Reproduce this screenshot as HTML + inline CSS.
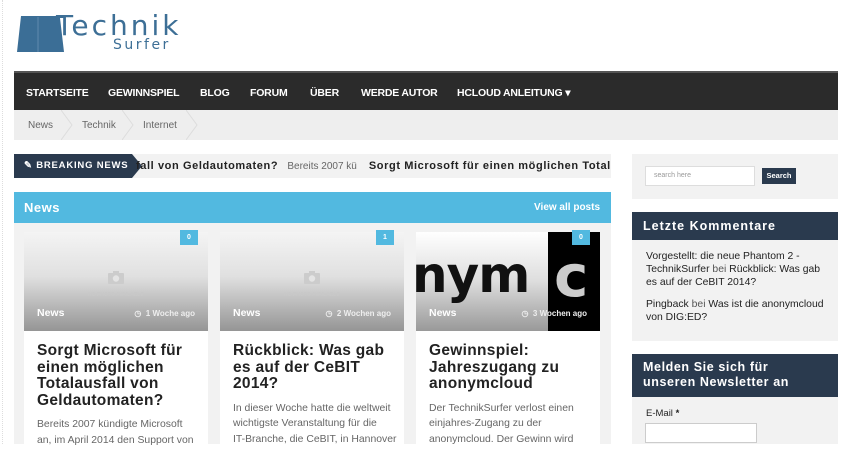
<!DOCTYPE html>
<html><head><meta charset="utf-8"><style>
*{margin:0;padding:0;box-sizing:border-box}
body{width:850px;height:444px;overflow:hidden;background:#fff;font-family:"Liberation Sans",sans-serif;position:relative}
.a{position:absolute}
.nav{left:14px;top:71px;width:824px;height:39px;background:#2b2b2b;border-top:2px solid #555}
.nav span{position:absolute;top:14px;color:#fff;font-weight:bold;font-size:10.5px;letter-spacing:-0.2px}
.bc{left:14px;top:110px;width:824px;height:30px;background:#eee}
.bc span{position:absolute;top:10px;font-size:10px;color:#666}
.sep{position:absolute;top:0;width:12px;height:30px}
.card{position:absolute;top:232px;width:184px;height:220px;background:#fff}
.img{height:99px;background:linear-gradient(#f4f4f4,#e0e0e0 45%,#959595);position:relative}
.card h3{font-size:15.5px;line-height:16.5px;font-weight:bold;color:#222;padding:12px 13px 0;letter-spacing:0.3px}
.card p{font-size:10.4px;line-height:15.5px;color:#666;padding:8px 0 0 13px;white-space:nowrap}
.tag{position:absolute;left:13px;top:75px;color:#fff;font-weight:bold;font-size:10.5px}
.ago{position:absolute;right:13px;top:77px;color:#eee;font-size:8px;font-weight:bold}
.cnt{position:absolute;right:10px;top:-2px;width:18px;height:15px;background:#52b9e0;color:#fff;font-size:7px;font-weight:bold;text-align:center;line-height:15px}
.hd{background:#2a3a4e;color:#fff;font-weight:bold;font-size:12.5px;letter-spacing:1px;padding:0 0 0 11px}
.cam{position:absolute;left:84px;top:38px}
.np{position:absolute;left:0;top:60px;width:184px;text-align:center;color:#c8c8c8;font-size:5px;font-weight:bold}
</style></head><body>
<div class="a" style="left:0;top:0;width:3px;height:444px;border-right:1px dotted #ddd"></div>
<svg class="a" style="left:16px;top:14px" width="50" height="40"><path d="M5 2 L48 2 L48 4 L44 4 L48 38 L1 38 Z" fill="#3b6e96"/><path d="M22 3 L22 38" stroke="#6a93b5" stroke-width="0.8"/></svg>
<div class="a" style="left:56px;top:9px;font-size:28px;color:#3d6f96;letter-spacing:3px;font-family:'DejaVu Sans',sans-serif">Technik</div>
<div class="a" style="left:113px;top:37px;font-size:14px;color:#3d6f96;letter-spacing:2.5px;font-family:'DejaVu Sans',sans-serif">Surfer</div>
<div class="a nav"><span style="left:12px">STARTSEITE</span><span style="left:94px">GEWINNSPIEL</span><span style="left:186px">BLOG</span><span style="left:236px">FORUM</span><span style="left:296px">ÜBER</span><span style="left:347px">WERDE AUTOR</span><span style="left:443px">HCLOUD ANLEITUNG ▾</span></div>
<div class="a bc"><span style="left:14px">News</span>
<svg class="sep" style="left:47px"><path d="M0 0 L11 15 L0 30" stroke="#ddd" fill="none"/></svg>
<span style="left:68px">Technik</span>
<svg class="sep" style="left:108px"><path d="M0 0 L11 15 L0 30" stroke="#ddd" fill="none"/></svg>
<span style="left:129px">Internet</span>
<svg class="sep" style="left:172px"><path d="M0 0 L11 15 L0 30" stroke="#ddd" fill="none"/></svg></div>
<div class="a" style="left:14px;top:154px;width:597px;height:24px;background:#f2f2f2;overflow:hidden;white-space:nowrap">
<div class="a" style="left:0;top:0;width:118px;height:24px;background:#2a3a4e;color:#fff;font-size:9.5px;font-weight:bold;letter-spacing:0.8px;line-height:24px;padding-left:10px">✎ BREAKING NEWS</div>
<div class="a" style="left:118px;top:0;border-left:10px solid #2a3a4e;border-top:12px solid transparent;border-bottom:12px solid transparent"></div>
<div class="a" style="left:122px;top:6px;font-size:11px;font-weight:bold;color:#222;letter-spacing:0.6px">fall von Geldautomaten? <span style="font-weight:normal;color:#666;font-size:10px;letter-spacing:0">&nbsp;&nbsp;Bereits 2007 kü&nbsp;&nbsp;&nbsp;</span> Sorgt Microsoft für einen möglichen Total</div></div>
<div class="a" style="left:14px;top:192px;width:597px;height:31px;background:#52b9e0;color:#fff;font-weight:bold">
<span class="a" style="left:10px;top:8px;font-size:13px;letter-spacing:0.5px">News</span><span class="a" style="right:11px;top:10px;font-size:10px">View all posts</span></div>
<div class="a" style="left:14px;top:223px;width:597px;height:221px;background:#f2f2f2"></div>
<div class="card" style="left:24px"><div class="img"><svg class="cam" width="16" height="14"><rect x="0" y="3" width="16" height="11" rx="1" fill="#ccc"/><rect x="5" y="1" width="6" height="3" fill="#ccc"/><circle cx="8" cy="8.5" r="3.2" fill="#e4e4e4"/></svg><div class="np">NO PHOTO AVAILABLE</div></div><span class="cnt">0</span><span class="tag">News</span><span class="ago">◷ &nbsp;1 Woche ago</span>
<h3>Sorgt Microsoft für einen möglichen Totalausfall von Geldautomaten?</h3><p>Bereits 2007 kündigte Microsoft<br>an, im April 2014 den Support von</p></div>
<div class="card" style="left:220px"><div class="img"><svg class="cam" width="16" height="14"><rect x="0" y="3" width="16" height="11" rx="1" fill="#ccc"/><rect x="5" y="1" width="6" height="3" fill="#ccc"/><circle cx="8" cy="8.5" r="3.2" fill="#e4e4e4"/></svg><div class="np">NO PHOTO AVAILABLE</div></div><span class="cnt">1</span><span class="tag">News</span><span class="ago">◷ &nbsp;2 Wochen ago</span>
<h3>Rückblick: Was gab es auf der CeBIT 2014?</h3><p>In dieser Woche hatte die weltweit<br>wichtigste Veranstaltung für die<br>IT-Branche, die CeBIT, in Hannover</p></div>
<div class="card" style="left:416px"><div class="img" style="background:linear-gradient(#fff,#ddd 50%,#999);overflow:hidden">
<div class="a" style="left:132px;top:0;width:52px;height:99px;background:#000"></div>
<div class="a" style="left:-4px;top:14px;font-size:50px;font-weight:bold;color:#111;letter-spacing:-1px;font-family:'DejaVu Sans',sans-serif">nym</div>
<div class="a" style="left:138px;top:10px;font-size:58px;font-weight:bold;color:#ccc;font-family:'DejaVu Sans',sans-serif">c</div></div>
<span class="cnt">0</span><span class="tag">News</span><span class="ago">◷ &nbsp;3 Wochen ago</span>
<h3>Gewinnspiel: Jahreszugang zu anonymcloud</h3><p>Der TechnikSurfer verlost einen<br>einjahres-Zugang zu der<br>anonymcloud. Der Gewinn wird</p></div>
<div class="a" style="left:632px;top:154px;width:206px;height:45px;background:#f2f2f2">
<div class="a" style="left:13px;top:12px;width:110px;height:20px;background:#fff;border:1px solid #ddd;font-size:7px;color:#999;padding:5px 8px">search here</div>
<div class="a" style="left:130px;top:14px;width:34px;height:16px;background:#2a3a4e;color:#fff;font-size:7.5px;font-weight:bold;text-align:center;line-height:16px">Search</div></div>
<div class="a" style="left:632px;top:212px;width:206px;height:129px;background:#f2f2f2">
<div class="hd" style="height:28px;line-height:28px">Letzte Kommentare</div>
<div style="padding:10px 12px 0 14px;font-size:10.4px;line-height:13px;color:#222">Vorgestellt: die neue Phantom 2 - TechnikSurfer <span style="color:#555">bei</span> Rückblick: Was gab es auf der CeBIT 2014?<br><div style="height:9px"></div>Pingback <span style="color:#555">bei</span> Was ist die anonymcloud von DIG:ED?</div></div>
<div class="a" style="left:632px;top:354px;width:206px;height:90px;background:#f2f2f2">
<div class="hd" style="height:43px;padding-top:6px;line-height:15px;letter-spacing:0.6px;padding-right:10px">Melden Sie sich für<br>unseren Newsletter an</div>
<div style="padding:11px 14px 0;font-size:9.5px;color:#222">E-Mail <b>*</b></div>
<div class="a" style="left:13px;top:69px;width:112px;height:20px;background:#fff;border:1px solid #ccc"></div></div>
</body></html>
